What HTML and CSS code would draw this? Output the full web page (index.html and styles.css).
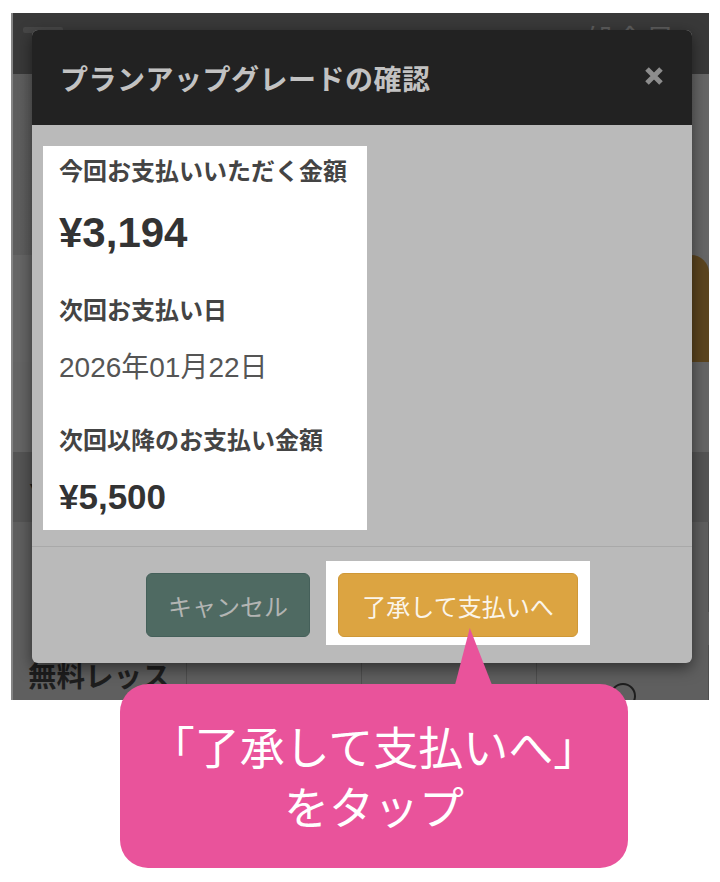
FILE: index.html
```html
<!DOCTYPE html>
<html lang="ja">
<head>
    <meta charset="UTF-8">
    <meta name="viewport" content="width=device-width, initial-scale=1.0">
    <title>プランアップグレードの確認</title>
    <link rel="stylesheet" href="styles.css">
</head>
<body>
    <div class="frame">
        <div class="shot">
            <!-- 背景のページ（暗く表示） -->
            <div class="shot-bar">
                <span class="shot-menu"></span>
                <span class="shot-member">一般会員</span>
            </div>
            <div class="shot-gap"></div>
            <div class="shot-action"><span class="shot-gold"></span></div>
            <div class="shot-gap2"></div>
            <div class="shot-head"><span class="shot-caret">▼</span></div>
            <div class="shot-table">
                <div class="shot-row shot-row-top">
                    <div class="shot-cell"></div>
                    <div class="shot-cell"></div>
                    <div class="shot-cell"></div>
                    <div class="shot-cell"></div>
                </div>
                <div class="shot-row">
                    <div class="shot-cell shot-name">無料レッス</div>
                    <div class="shot-cell"></div>
                    <div class="shot-cell"></div>
                    <div class="shot-cell shot-mark"><span class="shot-ring"></span></div>
                </div>
            </div>

            <!-- モーダル -->
            <div class="modal">
                <div class="modal-header">
                    <h4 class="modal-title">プランアップグレードの確認</h4>
                    <svg class="modal-close" width="20" height="20" viewBox="0 0 20 20">
                        <path d="M3 3 L17 17 M17 3 L3 17" stroke="#8d8d8d" stroke-width="5" fill="none"/>
                    </svg>
                </div>
                <div class="modal-body">
                    <div class="summary">
                        <p class="summary-label">今回お支払いいただく金額</p>
                        <p class="summary-price">¥3,194</p>
                        <p class="summary-label gap-big">次回お支払い日</p>
                        <p class="summary-date">2026年01月22日</p>
                        <p class="summary-label gap-date">次回以降のお支払い金額</p>
                        <p class="summary-price small">¥5,500</p>
                    </div>
                </div>
                <div class="modal-footer">
                    <button class="btn btn-cancel">キャンセル</button>
                    <div class="highlight">
                        <button class="btn btn-accept">了承して支払いへ</button>
                    </div>
                </div>
            </div>
        </div>

        <!-- 説明の吹き出し -->
        <div class="callout">「了承して支払いへ」<br>をタップ</div>
    </div>
</body>
</html>
```

FILE: styles.css
```css
body {
    margin: 0;
    padding: 0;
    background: #ffffff;
    font-family: 'Liberation Sans', 'Noto Sans CJK JP', sans-serif;
}

.frame {
    position: relative;
    width: 720px;
    height: 882px;
    overflow: hidden;
}

/* 背景のスクリーンショット部分 */
.shot {
    position: relative;
    margin: 13px 0 0 11px;
    width: 698px;
    height: 687px;
    overflow: hidden;
    background: #646464;
    border-left: 2px solid #858585;
    box-sizing: border-box;
}

.shot-bar {
    height: 61px;
    background: #393939;
    display: flex;
    justify-content: space-between;
    align-items: flex-start;
}

.shot-menu {
    width: 40px;
    height: 6px;
    margin: 14px 0 0 10px;
    background: #474747;
    border-radius: 2px;
}

.shot-member {
    margin: 12px 34px 0 0;
    font-size: 30px;
    line-height: 32px;
    color: #5d5d5d;
}

.shot-gap {
    height: 181px;
    background: linear-gradient(90deg, #5e5e5e, #676767);
}

.shot-action {
    height: 107px;
    display: flex;
    justify-content: flex-end;
    background: #666666;
}

.shot-gold {
    width: 220px;
    height: 107px;
    background: #5c451f;
    border-radius: 0 18px 0 0;
}

.shot-gap2 {
    height: 90px;
    background: #656565;
}

.shot-head {
    height: 70px;
    background: #555555;
    display: flex;
    align-items: center;
}

.shot-caret {
    margin-left: 14px;
    font-size: 14px;
    color: #1c1c1c;
}

.shot-table {
    background: #5f5f5f;
}

.shot-row {
    display: grid;
    grid-template-columns: 174px 175px 175px 172px;
}

.shot-row-top {
    height: 123px;
}

.shot-cell {
    border-right: 1px solid #4e4e4e;
    height: 90px;
}

.shot-name {
    box-sizing: border-box;
    padding: 14px 0 0 15px;
    font-size: 28.5px;
    line-height: 36px;
    font-weight: bold;
    color: #1e1e1e;
    white-space: nowrap;
}

.shot-mark {
    display: flex;
    justify-content: center;
    padding-top: 38px;
    height: 52px;
}

.shot-ring {
    width: 22px;
    height: 22px;
    border: 2px solid #1e1e1e;
    border-radius: 50%;
}

/* モーダル */
.modal {
    position: absolute;
    left: 19px;
    top: 17px;
    width: 660px;
    background: #bababa;
    border-radius: 6px;
    overflow: hidden;
    box-shadow: 0 5px 15px rgba(0, 0, 0, 0.5);
}

.modal-header {
    height: 95px;
    background: #222222;
    display: flex;
    justify-content: space-between;
    align-items: center;
    padding: 0 28px 0 28px;
}

.modal-title {
    margin: 0;
    font-size: 28px;
    letter-spacing: 0.5px;
    font-weight: bold;
    color: #c2c2c2;
}

.modal-close {
    margin-top: -4px;
}

.modal-body {
    padding: 21px 0 16px 11px;
}

.summary {
    width: 324px;
    box-sizing: border-box;
    background: #ffffff;
    padding: 10px 0 13px 16px;
}

.summary p {
    margin: 0;
}

.summary-label {
    font-size: 24px;
    line-height: 32px;
    font-weight: bold;
    color: #444444;
}

.summary-price {
    margin-top: 21px !important;
    font-size: 42px;
    line-height: 48px;
    font-weight: bold;
    color: #333333;
}

.summary-price.small {
    margin-top: 20px !important;
    font-size: 35px;
    line-height: 40px;
}

.summary-label.gap-big {
    margin-top: 38px;
}

.summary-date {
    margin-top: 23px !important;
    font-size: 28px;
    line-height: 36px;
    color: #555555;
}

.summary-label.gap-date {
    margin-top: 39px;
}

.modal-footer {
    border-top: 1px solid #a9a9a9;
    padding: 14px 0 18px 114px;
    display: flex;
    align-items: flex-start;
    gap: 16px;
}

.btn {
    height: 64px;
    border-radius: 6px;
    font-family: 'Liberation Sans', 'Noto Sans CJK JP', sans-serif;
    font-size: 24px;
    padding: 0;
    cursor: pointer;
}

.btn-cancel {
    margin-top: 12px;
    width: 164px;
    background: #4f6a62;
    border: 1px solid #45605a;
    color: #b3b5b3;
}

.highlight {
    background: #ffffff;
    padding: 12px 12px 8px 12px;
}

.btn-accept {
    display: block;
    width: 240px;
    background: #dca441;
    border: 1px solid #cf9837;
    color: #fbf5ea;
}

/* 吹き出し */
.callout {
    position: absolute;
    left: 120px;
    top: 684px;
    width: 508px;
    height: 184px;
    background: #e9539b;
    border-radius: 28px;
    display: flex;
    align-items: center;
    justify-content: center;
    text-align: center;
    font-family: 'Noto Sans CJK JP', sans-serif;
    font-size: 45px;
    font-weight: 400;
    line-height: 60px;
    color: #ffffff;
}

.callout::before {
    content: '';
    position: absolute;
    left: 335px;
    top: -56px;
    width: 37px;
    height: 57px;
    background: #e9539b;
    clip-path: polygon(40% 0, 100% 100%, 0 100%);
}
```
